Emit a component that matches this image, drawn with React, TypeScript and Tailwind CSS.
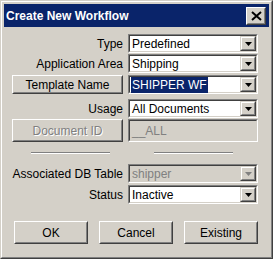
import React from 'react';

const font = "font-['Liberation_Sans',Arial,sans-serif]";

export default function App() {
  return (
    <div className={`w-[273px] h-[259px] bg-[#d4d0c8] ${font} text-[11px] text-black border border-t-[#d4d0c8] border-l-[#d4d0c8] border-b-[#404040] border-r-[#404040]`}>
      <div className="h-full border border-t-white border-l-white border-b-[#808080] border-r-[#808080] p-[2px] flex flex-col">
        {/* Title bar */}
        <div className="h-[23px] bg-[#0a246a] flex items-center justify-between pl-[2px] pr-[3px]">
          <span className="text-white font-bold text-[12px] leading-none">Create New Workflow</span>
          <CloseButton />
        </div>

        <div className="flex flex-col pl-[4px] pr-[10px] pt-[7px]">
          <Row label="Type">
            <Combo value="Predefined" />
          </Row>
          <Row label="Application Area" className="mt-[1px]">
            <Combo value="Shipping" />
          </Row>
          <div className="flex items-center mt-[2px]">
            <div className="w-[120px] pl-[4px]">
              <Button label="Template Name" className="w-[111px] h-[19px]" />
            </div>
            <Combo value="SHIPPER WF" selected />
          </div>
          <Row label="Usage" className="mt-[5px]">
            <Combo value="All Documents" />
          </Row>
          <div className="flex items-center mt-[1px]">
            <div className="w-[120px] pl-[4px]">
              <Button label="Document ID" disabled className="w-[111px] h-[23px]" />
            </div>
            <div className="w-[130px] h-[23px] border border-t-[#808080] border-l-[#808080] border-b-white border-r-white">
              <div className="h-full border border-t-[#404040] border-l-[#404040] border-b-[#d4d0c8] border-r-[#d4d0c8] bg-[#d4d0c8] flex items-center pl-[2px] text-[#808080] text-[12px]">
                __ALL
              </div>
            </div>
          </div>

          <div className="flex mt-[10px]">
            <div className="w-[120px] flex justify-center pl-[4px]">
              <Separator />
            </div>
            <div className="w-[130px] flex justify-center">
              <Separator />
            </div>
          </div>

          <Row label="Associated DB Table" className="mt-[10px]">
            <Combo value="shipper" disabled />
          </Row>
          <Row label="Status" className="mt-[2px]">
            <Combo value="Inactive" />
          </Row>
        </div>

        <div className="flex gap-[11px] pl-[10px] mt-[17px]">
          <Button label="OK" className="w-[74px] h-[23px]" />
          <Button label="Cancel" className="w-[74px] h-[23px]" />
          <Button label="Existing" className="w-[74px] h-[23px]" />
        </div>
      </div>
    </div>
  );
}

function Row({ label, children, className = '' }: { label: string, children: React.ReactNode, className?: string }) {
  return (
    <div className={`flex items-center ${className}`}>
      <div className="w-[120px] text-right pr-[5px] text-[12px] leading-none">{label}</div>
      {children}
    </div>
  );
}

function Combo({ value, selected, disabled }: { value: string, selected?: boolean, disabled?: boolean }) {
  return (
    <div className="w-[130px] h-[19px] border border-t-[#808080] border-l-[#808080] border-b-white border-r-white">
      <div className={`h-full flex border border-t-[#404040] border-l-[#404040] border-b-[#d4d0c8] border-r-[#d4d0c8] ${disabled ? 'bg-[#d4d0c8]' : 'bg-white'}`}>
        <div className="flex-1 flex items-center pl-[1px] text-[12px] leading-none">
          {selected ? (
            <span className="bg-[#0a246a] text-white px-[1px] py-[2px]">{value}</span>
          ) : (
            <span className={`px-[1px] ${disabled ? 'text-[#808080]' : ''}`}>{value}</span>
          )}
        </div>
        <ArrowButton disabled={disabled} />
      </div>
    </div>
  );
}

function ArrowButton({ disabled }: { disabled?: boolean }) {
  return (
    <div className="w-[16px] h-full border border-t-[#d4d0c8] border-l-[#d4d0c8] border-b-[#404040] border-r-[#404040]">
      <div className="h-full bg-[#d4d0c8] border border-t-white border-l-white border-b-[#808080] border-r-[#808080] flex items-center justify-center">
        <svg width="7" height="4" viewBox="0 0 7 4">
          <path d="M0 0h7L3.5 4z" fill={disabled ? '#808080' : '#000'} />
        </svg>
      </div>
    </div>
  );
}

function Button({ label, className = '', disabled }: { label: string, className?: string, disabled?: boolean }) {
  return (
    <div className={`border border-t-white border-l-white border-b-[#404040] border-r-[#404040] ${className}`}>
      <div className="h-full border border-t-[#d4d0c8] border-l-[#d4d0c8] border-b-[#808080] border-r-[#808080] flex items-center justify-center text-[12px] leading-none">
        <span className={disabled ? 'text-[#808080] [text-shadow:1px_1px_0_#fff]' : ''}>{label}</span>
      </div>
    </div>
  );
}

function CloseButton() {
  return (
    <div className="w-[20px] h-[18px] border border-t-white border-l-white border-b-[#404040] border-r-[#404040]">
      <div className="h-full bg-[#d4d0c8] border border-t-[#d4d0c8] border-l-[#d4d0c8] border-b-[#808080] border-r-[#808080] flex items-center justify-center">
        <svg width="11" height="10" viewBox="0 0 11 10">
          <path d="M1 1l9 8M10 1l-9 8" stroke="#000" strokeWidth="2" />
        </svg>
      </div>
    </div>
  );
}

function Separator() {
  return (
    <div className="w-[79px]">
      <div className="h-px bg-[#808080]" />
      <div className="h-px bg-white" />
    </div>
  );
}
